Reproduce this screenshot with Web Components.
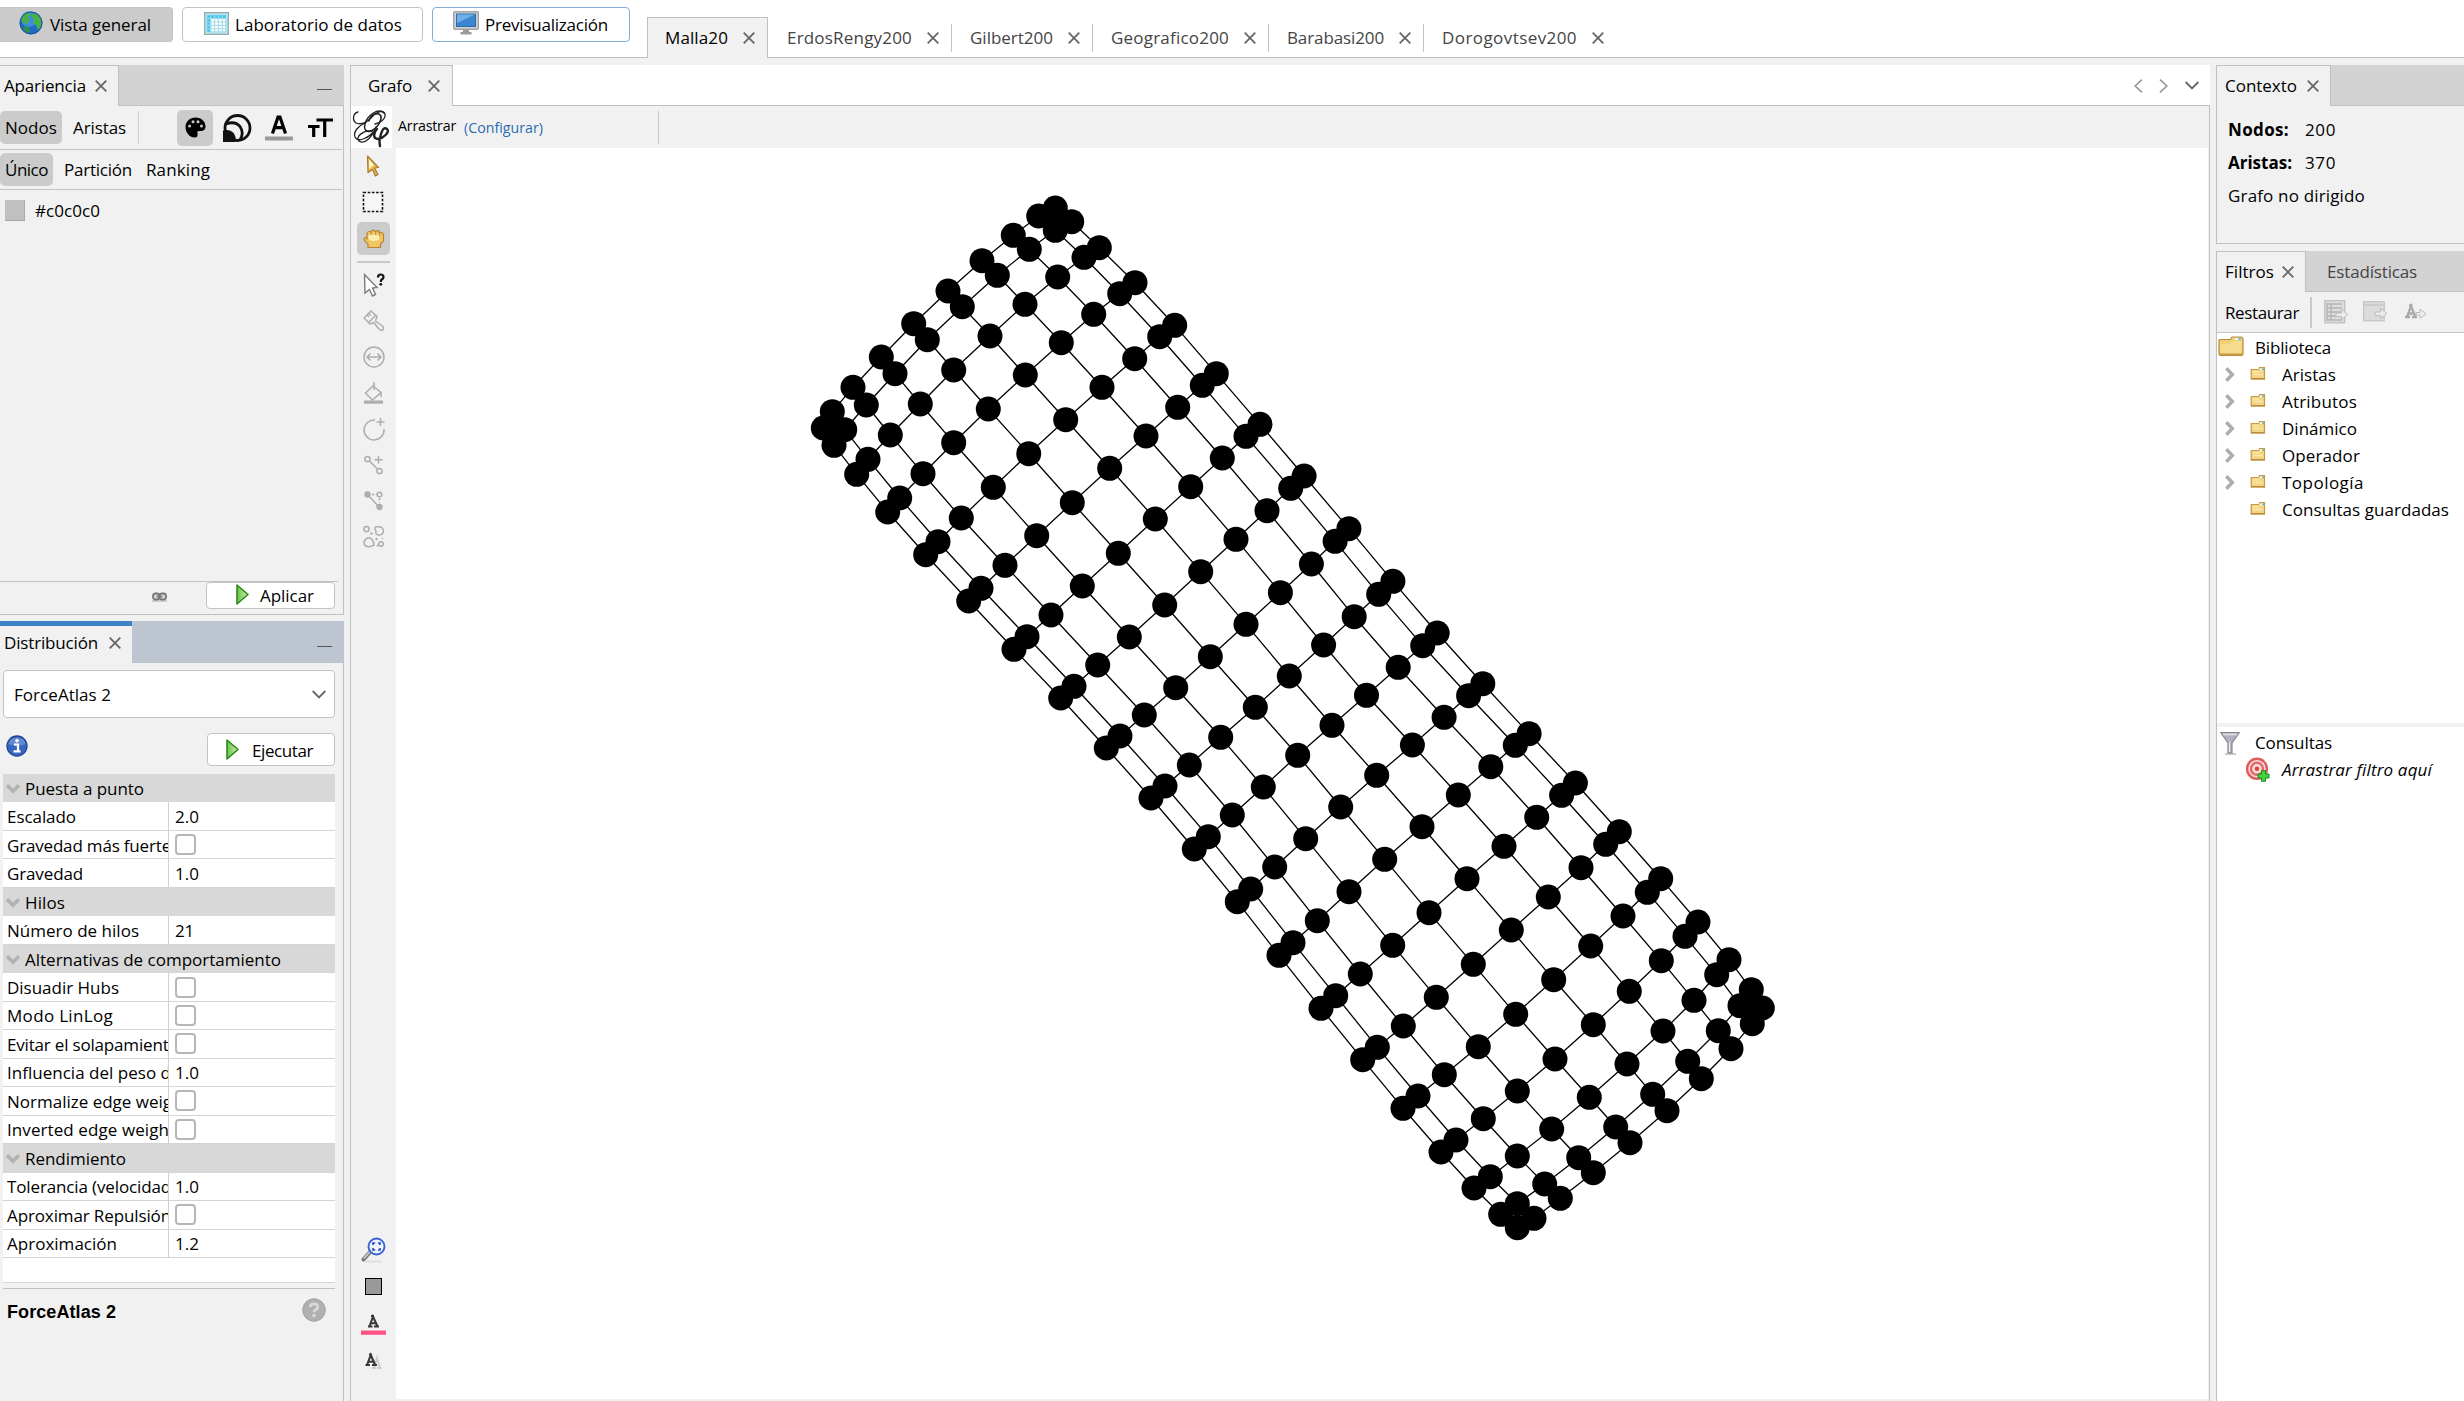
<!DOCTYPE html>
<html lang="es">
<head>
<meta charset="utf-8">
<title>Gephi</title>
<style>
html,body{margin:0;height:100%;overflow:hidden}
body{background:#f1f1f1;color:#000;font:17px/24px "Open Sans","Noto Sans",sans-serif}
gephi-app{display:block}
</style>
</head>
<body>
<gephi-app></gephi-app>
<script>
const define = (name, html, setup) => customElements.define(name, class extends HTMLElement {
  constructor() { super(); this.attachShadow({ mode: 'open' }); }
  connectedCallback() {
    if (this.shadowRoot.childNodes.length) return;
    const t = document.createElement('template');
    t.innerHTML = '<style>*{box-sizing:border-box}</style>' + (typeof html === 'function' ? html(this) : html);
    this.shadowRoot.append(t.content.cloneNode(true));
    if (setup) setup(this);
  }
});
const pen = document.createElement('canvas').getContext('2d');

/* Text run tracked to an exact advance width */
define('ui-text', el => {
  const a = n => el.getAttribute(n), size = +(a('size') || 17), w = +a('w'), s = el.textContent;
  const fam = a('family') ? `"${a('family')}",sans-serif` : '"Open Sans","Noto Sans",sans-serif';
  const font = `${el.hasAttribute('italic') ? 'italic' : 'normal'} ${el.hasAttribute('bold') ? 700 : 400} ${size}px ${fam}`;
  pen.font = font;
  const ls = w ? (w - pen.measureText(s).width) / s.length : +(a('ls') || 0);
  return `<style>:host{display:block;flex:none;white-space:nowrap;${w ? `width:${w}px;` : ''}}
  span{display:block;font:${font.replace(size + 'px', size + 'px/24px')};letter-spacing:${ls.toFixed(3)}px}</style><span><slot></slot></span>`;
});

const G = 'fill="none" stroke="#adadad" stroke-width="1.5"';
const folder = `<path d="M1 4.500Q1 3.500 2 3.500H12.500L14 1H23.500Q25 1 25 3V18Q25 19.500 23.500 19.500H2.500Q1 19.500 1 18Z" fill="#efcf78" stroke="#b98b3a" stroke-width="1.200"/><path d="M2.500 8H12L15 5H23.500V17.500H2.500Z" fill="#f6dd8e"/><path d="M2 18.200H24" stroke="#c99b45" stroke-width="1.500"/><path d="M17 3h6" stroke="#fff" stroke-width="1.500"/><path d="M20 3h3" stroke="#43c0e8" stroke-width="1.500"/>`;
const icons = {
  close: [12, 12, `<path d="M.7.700L11.300 11.300M11.300.700L.700 11.300" stroke="#666" stroke-width="1.800"/>`],
  globe: [24, 24, `<circle cx="12" cy="12" r="11.300" fill="#2167c4"/><circle cx="10" cy="8" r="8" fill="#4f9be6" opacity=".7"/><path d="M2 7Q5 1.500 11 1.500L12 4L9 6L11 9L8 13L4 12ZM13 3L18 2.500Q23 6 23 12Q22 17 19 19L17 14L14 12L15 8L12 6Z" fill="#48b04b"/><path d="M6 15L10 16L11 21L8 22Q5 20 4 17Z" fill="#2d8f52"/><circle cx="12" cy="12" r="11" fill="none" stroke="#174f9a"/>`],
  sheet: [25, 23, `<rect x=".75" y=".75" width="23.500" height="21.500" fill="#e9f3f4" stroke="#8faeb2" stroke-width="1.500"/><rect x="3" y="3" width="19" height="17" fill="#fff"/><path d="M3 3h19v3.500H3zM3 3h3.800v17H3z" fill="#45c8ea"/><path d="M3 6.500h19M3 10h19M3 13.400h19M3 16.800h19M6.800 3v17M10.600 3v17M14.400 3v17M18.200 3v17" stroke="#a7dcec" stroke-width="1.100"/><rect x="3" y="3" width="19" height="17" fill="none" stroke="#6fd2ec"/>`],
  screen: [26, 24, `<rect x=".75" y=".75" width="24.500" height="17.500" rx="1" fill="#d2d2d2" stroke="#a4a4a4" stroke-width="1.500"/><rect x="3.500" y="3" width="19" height="12.500" fill="#3b86cf" stroke="#2a6cb0"/><path d="M4 3.500H22L4 12Z" fill="#6fb0ea"/><path d="M10 18.500h6v2.500h2.500v2.500h-11V21H10z" fill="#9b9b9b"/>`],
  palette: [21, 21, `<path d="M10.500.500C16.500.500 20.500 4.500 20.500 9.500C20.500 13.500 17 14.500 14.500 14C12.500 13.700 12 15 12.500 16.500C13 19 12 20.500 10 20.500C4.500 20.500.500 15.500.500 10C.500 4.500 5 .500 10.500.500Z" fill="#000"/><g fill="#ccc"><circle cx="4.600" cy="9" r="1.500"/><circle cx="8" cy="4.800" r="1.500"/><circle cx="13" cy="4.800" r="1.500"/><circle cx="16.500" cy="9" r="1.500"/></g>`],
  rings: [29, 28, `<circle cx="14.500" cy="14" r="12.500" fill="none" stroke="#111" stroke-width="2.800"/><path d="M3 10Q12 6.500 17 12.500Q21.500 19 17 26" fill="none" stroke="#111" stroke-width="2.800"/><path d="M0 16.500Q7 15 10.500 19Q13.500 23 12.500 28H0Z" fill="#111"/>`],
  fontColor: [28, 26, `<path d="M7.500 18.500L13 2H15L20.500 18.500M9.800 12.700H18.200" fill="none" stroke="#000" stroke-width="3.200"/><path d="M0 21.500h28v4H0z" fill="#999"/>`],
  fontSize: [25, 20, `<path d="M0 8.500H11.500M5.700 8.500V19M8.500 2H25M16.700 2V19" fill="none" stroke="#000" stroke-width="3.200"/>`],
  link: [15, 10, `<path d="M0 9h15" stroke="#ccc" stroke-width="2"/><rect x="1" y="1.500" width="6.500" height="6" rx="2.500" fill="#ddd" stroke="#777" stroke-width="1.800"/><rect x="7.500" y="1.500" width="6.500" height="6" rx="2.500" fill="#ddd" stroke="#777" stroke-width="1.800"/><path d="M4.500 4.500h6" stroke="#777" stroke-width="1.800"/>`],
  play: [13, 21, `<defs><linearGradient id="g" x2="1"><stop offset="0" stop-color="#6cc24a"/><stop offset="1" stop-color="#c9efb0"/></linearGradient></defs><path d="M1 1L12 10.500L1 20Z" fill="url(#g)" stroke="#2c8a1d" stroke-width="1.600" stroke-linejoin="round"/>`],
  chevron: [14, 9, `<path d="M.7 1L7 7.500L13.300 1" fill="none" stroke="#666" stroke-width="1.800"/>`],
  left: [9, 14, `<path d="M8 .700L1.200 7L8 13.300" fill="none" stroke="#9a9a9a" stroke-width="1.700"/>`],
  right: [9, 14, `<path d="M1 .700L7.800 7L1 13.300" fill="none" stroke="#9a9a9a" stroke-width="1.700"/>`],
  info: [22, 22, `<circle cx="11" cy="11" r="10" fill="#3766bd" stroke="#1e4596" stroke-width="1.300"/><path d="M2.500 9Q3.500 2.500 11 2.500T19.500 9Q11 12.500 2.500 9Z" fill="#7fa1de" opacity=".6"/><circle cx="11" cy="5.800" r="1.800" fill="#fff"/><path d="M8 9.500h4v6.500M7.500 16.300h7" fill="none" stroke="#fff" stroke-width="2.200"/>`],
  fold: [14, 10, `<path d="M1 1.200L7 7.200L13 1.200" fill="none" stroke="#b2b2b2" stroke-width="3.700"/>`],
  expand: [10, 15, `<path d="M1.300 1.200L7.300 7.500L1.300 13.800" fill="none" stroke="#adadad" stroke-width="3.500"/>`],
  help: [24, 24, `<circle cx="12" cy="12" r="11.300" fill="#b0b0b0" stroke="#a2a2a2"/><path d="M8.300 9Q8.300 5.800 12 5.800T15.700 9Q15.700 11 13.500 11.800Q12 12.400 12 14.300" fill="none" stroke="#d9d9d9" stroke-width="2.800"/><circle cx="12" cy="17.500" r="1.800" fill="#d9d9d9"/>`],
  logo: [41, 42, `<rect width="41" height="42" fill="#fff"/><g fill="none" stroke="#222" stroke-linecap="round"><path d="M7 6C2 7 1 14 5 17C10 19 16 16 20 12C25 6 32 3 34 8C35 13 29 17 24 18" stroke-width="1.300"/><path d="M33 7C27 1 16 10 14 18C12 25 17 27 22 24C27 21 31 14 30 10C27 5 19 9 18 15" stroke-width="1.500"/><path d="M14 17C7 20 2 26 4 31C7 37 18 32 24 24M21 25C12 24 4 31 8 35C14 39 21 31 25 21" stroke-width="1.300"/><path d="M26 23C22 27 22 33 27 33C33 32 39 26 36 23C32 20 30 27 29 32C28 36 28 37 29 40" stroke-width="2.400"/></g>`],
  cursor: [14, 22, `<path d="M1.500 1L12.500 12.500L8.500 13L12 19.500L9.500 21L6.500 14.500L2 17.500Z" fill="#e9b94b" stroke="#a9782f" stroke-width="1.200" stroke-linejoin="round"/><path d="M3 4L8 10L3 14Z" fill="#fff3cf"/>`],
  marquee: [22, 22, `<rect x="1.500" y="1.500" width="19" height="19" fill="#f6f6f6" stroke="#111" stroke-width="1.600" stroke-dasharray="2.600 1.600"/>`],
  hand: [22, 20, `<path d="M5 18.500V15L1.500 11.500Q0 9 2.500 8.500L4 9V4.500Q4.200 2.500 6 2.500T8 4Q8.500 1.200 10.300 1.200T12.500 3.500Q13 1.500 14.700 1.700T16.500 4.500Q17 3 18.700 3.500T20.500 6V12L17.500 15V18.500Z" fill="#f0c663" stroke="#b78431" stroke-width="1.200"/><path d="M5 7L8 5L9.500 6.500L12 5L14 6.500L16 6V11Q11 13 6 11Z" fill="#fdebb0"/><path d="M8 3.500V6M12.500 3.500V6M16.500 4.500V7M4 8.500V11" stroke="#c6923c"/>`],
  query: [22, 24, `<path d="M1.500 1.500L14 14.500L9.500 15L12.500 21.500L9.500 23L6.500 16.500L2 20Z" fill="#fff" stroke="#7b7b7b" stroke-width="1.400"/><path d="M15 4.500Q15 1.500 17.700 1.500T20.500 4Q20.500 5.500 18.800 6.500Q17.800 7.200 17.800 9" fill="none" stroke="#111" stroke-width="2.200"/><circle cx="17.800" cy="11.300" r="1.400" fill="#111"/>`],
  brush: [22, 22, `<g ${G} stroke-linejoin="round"><path d="M1 8L8 1L14 6.500L12.500 11L20 16.500Q21.500 19.500 18.500 20.500Q16.500 20.500 11 12.500L7 14Z"/><path d="M4 5L6 7M6 3.500L8 5.500M5.500 12.500L13 5"/></g>`],
  width: [22, 22, `<g ${G}><circle cx="11" cy="11" r="10"/><path d="M4 11H18M7.500 7.500L4 11L7.500 14.500M14.500 7.500L18 11L14.500 14.500"/></g>`],
  bucket: [20, 22, `<g ${G}><path d="M1.500 11L9 4L17 10.500L8.500 18ZM10 0V8M17 10V15"/></g><path d="M0 18.500h19v3.200H0z" fill="#adadad"/>`],
  addNode: [22, 24, `<g ${G}><path d="M12 3A10 10 0 1 0 21 12M17.500 1V9M13.500 5H21.500"/></g>`],
  addEdge: [20, 20, `<g ${G}><circle cx="3.500" cy="4" r="2.600"/><circle cx="15.500" cy="16" r="2.600"/><path d="M5.500 6L13.500 14M14.500 1V8.500M10.500 4.700H18.500"/></g>`],
  path: [20, 20, `<circle cx="3.500" cy="3.500" r="3.200" fill="#adadad"/><circle cx="15.500" cy="16" r="3.200" fill="#adadad"/><g ${G}><circle cx="15.500" cy="3.500" r="2.300"/><path d="M4 4L15 16"/><path d="M8 3.500H13M15.500 7V12" stroke-dasharray="2.500 2"/></g>`],
  blobs: [22, 23, `<g ${G}><circle cx="3.500" cy="4" r="2.600"/><path d="M13 6Q10 2 14 1.800Q20 1 20.500 6Q20 10.500 15 10Q12 9 13 6Z"/><path d="M2 15Q5 11 8.500 14Q11 17 11 20Q6 23 2 20.500Q0 18 2 15Z"/><circle cx="18" cy="19" r="2.200"/></g><g fill="#adadad"><circle cx="8.500" cy="8.500" r="1.200"/><circle cx="13.500" cy="14" r="1.200"/><circle cx="14.500" cy="20.500" r="1"/><circle cx="19.500" cy="13.500" r=".8"/></g>`],
  zoom: [25, 26, `<path d="M4 24.500h17" stroke="#ddd" stroke-width="2"/><path d="M9.500 14.500L2.500 22.500" stroke="#777" stroke-width="4" stroke-linecap="round"/><path d="M9 14.500L3 21.500" stroke="#ccc" stroke-width="1.800"/><circle cx="15.500" cy="9.500" r="8" fill="#eef3ff" stroke="#3b62cf" stroke-width="1.900"/><path d="M12 8V6H14.200M17 6H19V8M19 11V13H17M14.200 13H12V11" fill="none" stroke="#2b4fc0" stroke-width="1.700"/>`],
  square: [17, 17, `<rect x=".5" y=".5" width="16" height="16" fill="#999" stroke="#000"/>`],
  labelColor: [25, 20, `<path d="M7 11.500h4.500M13 11.500h5M8.500 11.500L12 1.500L16.500 11.500M9.700 8.300h5M10 1h3" fill="none" stroke="#383838" stroke-width="2.100"/><path d="M0 15.500h25v4.300H0z" fill="#ff5383"/>`],
  labelShadow: [17, 17, `<path d="M7 15h4M12 15h4.500M9 15L12 5L15 15" fill="none" stroke="#ccc" stroke-width="2"/><path d="M.5 12h4.500M7 12h5M2 12L5.800 2L10.200 12M3.300 8.800h5M4 1.500h3" fill="none" stroke="#383838" stroke-width="2.100"/>`],
  folder: [26, 21, folder],
  folderSmall: [16, 13, `<path d="M1.200 2.500H9.500V.7H14.500V12H1.200Z" fill="#f3d585" stroke="#c79a45" stroke-width="1.200"/><path d="M3 5H9M3 7.500H13" stroke="#fae7a8" stroke-width="1.500"/><path d="M1 11.700H15" stroke="#b98b3a" stroke-width="1.400"/><path d="M9.500 2.300h3" stroke="#fff" stroke-width="1.500"/><path d="M12 2.300h2" stroke="#43c0e8" stroke-width="1.500"/>`],
  colAdd: [25, 24, `<rect x=".7" y=".7" width="20" height="22" fill="#ddd" stroke="#c2c2c2" stroke-width="1.400"/><path d="M3 4h15M3 8h15M3 12h15M3 16h15M3 20h15M3 3v18M7 3v18" stroke="#b4b4b4" stroke-width="1.400"/><path d="M12 13h5.500V9.500L24 14.500L17.500 19.500V16.500H12Z" fill="#ececec" stroke="#bbb"/>`],
  winAdd: [25, 22, `<rect x=".7" y=".7" width="20.500" height="19" fill="#dcdcdc" stroke="#c6c6c6" stroke-width="1.400"/><path d="M1 4h20" stroke="#c9c9c9" stroke-width="1.500"/><path d="M12 11h5.500V7.500L24 12.500L17.500 17.500V14.500H12Z" fill="#ececec" stroke="#bbb"/>`],
  aAdd: [22, 17, `<path d="M0 13h5M7 13h5M2 13L6 2L10.500 13M3.500 9.500h5M4 1.500h3.500" fill="none" stroke="#aaa" stroke-width="2.300"/><path d="M11 8.500h4V5L21 9.800L15 14.500V11H11Z" fill="#eee" stroke="#bbb"/>`],
  funnel: [20, 24, `<path d="M5 23h11" stroke="#ccc" stroke-width="2"/><path d="M.8 1.500H19.200L12 12V22H8V12Z" fill="#b0b1bc" stroke="#85868f" stroke-width="1.200"/><path d="M3 3.500H17" stroke="#e2e2e8" stroke-width="1.500"/><path d="M9.500 11V21" stroke="#ececf2" stroke-width="1.300"/>`],
  target: [24, 24, `<circle cx="11" cy="10.800" r="10" fill="#fbdcdc" stroke="#e25a5a" stroke-width="2.400"/><circle cx="11" cy="10.800" r="6" fill="none" stroke="#e36a6a" stroke-width="2.400"/><circle cx="11" cy="10.800" r="2.300" fill="#dd4444"/><path d="M15.500 12.500h4v3.500h3.500v4h-3.500v3.300h-4V20H12v-4h3.500z" fill="#43d33e" stroke="#188c22"/>`]
};
define('ui-icon', el => {
  const [w, h, body] = icons[el.getAttribute('name')];
  return `<style>:host{display:block;flex:none;width:${w}px;height:${h}px}svg{display:block;overflow:visible}</style><svg width="${w}" height="${h}" viewBox="0 0 ${w} ${h}">${body}</svg>`;
});

/* Large perspective buttons */
define('view-button', `<style>:host{display:flex;flex:none;align-items:center;height:35px;border:1.500px solid #c4c4c4;border-radius:4px;background:#fff;padding-top:1px}
:host([on]){background:#cbcbcb;border-color:#c4c4c4;border-left:0;border-radius:0 4px 4px 0}:host([hot]){border-color:#84aed8}</style><slot></slot>`);

/* Document tab of the workspace strip */
define('work-tab', el => `<style>:host{display:flex;flex:none;align-items:center;height:41px;color:#444}
:host([active]){background:#f1f1f1;border:solid #c0c0c0;border-width:1px 1px 0;color:#000;margin-right:19px;height:41px;padding:0 12px 0 17px}
i{width:1px;height:28px;background:#c4c4c4;margin:0 18px 0 12px}ui-icon{margin-left:15px}</style>
<ui-text w="${el.getAttribute('w')}">${el.getAttribute('label')}</ui-text><ui-icon name="close"></ui-icon>${el.hasAttribute('active') || el.hasAttribute('last') ? '' : '<i></i>'}`);

/* Docked panel header with its tabs */
define('dock-head', el => {
  const a = n => el.getAttribute(n), f = el.hasAttribute('focused');
  return `<style>:host{display:flex;height:${f ? 42 : 41}px;background:${a('bg') || '#d3d3d3'};border-bottom:1px solid ${f ? '#bcc5d0' : '#c0c0c0'}}
.tab{display:flex;align-items:center;width:${a('tw')}px;height:41px;padding:0 0 0 ${a('pl')}px;gap:${a('gap') || 10}px;background:#f1f1f1;border:solid #c0c0c0;border-width:1px 1px 0 ${a('lb') || 0}px}
${f ? '.tab{height:42px;border:0;border-top:5px solid #3d82c8;padding-bottom:3px}' : ''}
.rest{flex:1;display:flex;align-items:center}.min{width:15px;height:1.500px;background:#555;margin:${f ? 10 : 9}px 12px 0 auto}</style>
<div class="tab"><ui-text w="${a('w')}">${a('label')}</ui-text><ui-icon name="close"></ui-icon></div><div class="rest"><slot></slot>${el.hasAttribute('min') ? '<div class="min"></div>' : ''}</div>`;
});

define('appearance-panel', `<style>:host{display:flex;flex-direction:column;height:550px;border:solid #c0c0c0;border-width:0 1px 1px 0}
dock-head{margin-right:-1px}.bar{display:flex;align-items:center;height:44px;border-bottom:1px solid #c4c4c4;width:342px}
.b2{height:40px}.on{background:#cbcbcb;border-radius:5px;height:33px;display:flex;align-items:center;padding:0 5px}.bar ui-text{position:relative;top:.5px}
.sep{width:1px;height:33px;background:#cfcfcf;margin:0 38px 0 12px}.pal{width:36px;height:36px;border-radius:5px;background:#cbcbcb;display:grid;place-items:center;margin-right:10px}
.sw{display:flex;gap:10px;align-items:center;height:40px;padding-left:5px}.sw i{width:20px;height:21px;background:#c0c0c0;border:solid #a9a9a9;border-width:0 1px 1px 0}
.foot{margin-top:auto;display:flex;align-items:flex-start;height:33px;border-top:1px solid #c4c4c4;width:338px}
.btn{display:flex;align-items:center;width:129px;height:27px;margin-left:39px;border:1.500px solid #c4c4c4;border-radius:4px;background:#fff;padding-left:29px;gap:11px}</style>
<dock-head label="Apariencia" w="82" tw="119" pl="4" gap="9" min></dock-head>
<div class="bar"><div class="on"><ui-text w="52">Nodos</ui-text></div><ui-text w="53" style="margin-left:11px">Aristas</ui-text><div class="sep"></div>
<div class="pal"><ui-icon name="palette"></ui-icon></div><ui-icon name="rings"></ui-icon><ui-icon name="fontColor" style="margin-left:13px"></ui-icon><ui-icon name="fontSize" style="margin-left:15px"></ui-icon></div>
<div class="bar b2"><div class="on"><ui-text w="43">Único</ui-text></div><ui-text w="68" style="margin-left:11px">Partición</ui-text><ui-text w="64" style="margin-left:14px">Ranking</ui-text></div>
<div class="sw"><i></i><ui-text w="65" style="margin-top:1px">#c0c0c0</ui-text></div>
<div class="foot"><ui-icon name="link" style="margin:10px 0 0 152px"></ui-icon><div class="btn"><ui-icon name="play" style="margin-top:-2px"></ui-icon><ui-text w="54">Aplicar</ui-text></div></div>`);

/* One line of the property sheet: group heading, value or checkbox */
define('prop-row', el => {
  const a = n => el.getAttribute(n), v = a('v');
  return `<style>:host{display:flex;height:28.480px}
.h{flex:1;background:#d8d8d8;display:flex;align-items:center;gap:5px;padding:1px 0 0 3px}
.l{width:165px;overflow:hidden;padding:2px 0 0 4px}.v{flex:1;border-left:1px solid #d0d0d0;padding:1px 0 0 6px}.l,.v{border-bottom:1px solid #d4d4d4;display:flex;align-items:center}
.c{padding:0 0 0 6px}.c i{width:21px;height:21px;border:2px solid #b6b6b6;border-radius:4px;background:#fff}</style>` +
  (v === null ? `<div class="h"><ui-icon name="fold"></ui-icon><ui-text w="${a('w')}">${a('l')}</ui-text></div>`
   : `<div class="l"><ui-text w="${a('w')}">${a('l')}</ui-text></div><div class="v ${v ? '' : 'c'}">${v ? `<ui-text w="${v === '21' ? 19 : 24}">${v}</ui-text>` : '<i></i>'}</div>`);
});
const props = [['Puesta a punto',119],['Escalado',69,'2.0'],['Gravedad más fuerte',164,''],['Gravedad',76,'1.0'],['Hilos',40],['Número de hilos',132,'21'],
['Alternativas de comportamiento',256],['Disuadir Hubs',112,''],['Modo LinLog',106,''],['Evitar el solapamient',161.500,''],['Influencia del peso d',164,'1.0'],
['Normalize edge weig',165,''],['Inverted edge weigh',162,''],['Rendimiento',101],['Tolerancia (velocidad',164,'1.0'],['Aproximar Repulsión',164,''],['Aproximación',110,'1.2']];
define('layout-panel', `<style>:host{display:flex;flex-direction:column;flex:1;border-right:1px solid #c0c0c0}
dock-head{margin-right:-1px}.combo{display:flex;align-items:center;justify-content:space-between;width:332px;height:48px;margin:7px 0 0 3px;padding:0 8px 0 10px;border:1.500px solid #c4c4c4;border-radius:4px;background:#fff}
.run{display:flex;justify-content:space-between;margin:15px 8px 8px 6px;height:33px}.btn{display:flex;align-items:center;width:128px;border:1.500px solid #c4c4c4;border-radius:4px;background:#fff;padding:2px 0 0 18px;gap:13px}
.sheet{margin-left:3px;width:332px;height:509px;background:#fff;border-bottom:1px solid #d4d4d4}.desc{display:flex;justify-content:space-between;margin:5px 0 0 3px;width:332px;border-top:1px solid #c0c0c0;padding:9px 9px 0 4px}</style>
<dock-head label="Distribución" w="94" tw="132" pl="4" gap="11" bg="#bcc5d0" focused min></dock-head>
<div class="combo"><ui-text w="97" style="margin-top:1px">ForceAtlas 2</ui-text><ui-icon name="chevron"></ui-icon></div>
<div class="run"><ui-icon name="info" style="margin-top:2px"></ui-icon><div class="btn"><ui-icon name="play" style="margin-top:-3px"></ui-icon><ui-text w="61">Ejecutar</ui-text></div></div>
<div class="sheet">${props.map(([l, w, v]) => `<prop-row l="${l}" w="${w}"${v === undefined ? '' : ` v="${v}"`}></prop-row>`).join('')}</div>
<div class="desc"><ui-text bold size="18" family="Liberation Sans" w="109" style="margin-top:2px">ForceAtlas 2</ui-text><ui-icon name="help"></ui-icon></div>`);

/* 20 × 10 mesh; positions were sampled in four tiles: [origin x, origin y, scale x, scale y] */
const tiles = { a: [800,180,3,3], b: [900,600,3,3], c: [1200,350,2.6133,3], d: [1300,800,3,3] };
const mesh = `a 766,84 716,108 640,166 546,242 444,333 341,431 244,531 159,622 97,695 70,744
a 815,125 766,151 688,208 592,286 487,380 382,479 285,581 199,675 134,749 102,796
a 898,203 852,232 773,291 675,373 570,468 461,570 361,672 271,765 204,838 170,883
a 1005,308 959,341 881,403 784,488 676,585 565,687 461,788 369,881 299,954 263,996
a 1124,436 1079,470 1004,536 906,622 797,719 686,821 580,922 484,1014 414,1085 377,1124
a 1249,581 1207,616 1133,682 1038,768 929,865 817,968 710,1067 615,1156 543,1225 506,1263
a 1380,733 1338,769 1267,834 1172,920 1066,1017 955,1120 847,1218 753,1305 681,1370 642,1408
c 272,378 237,415 a 1401,992 1308,1078 1202,1175 1094,1275 988,1371 b 593,195 522,259 482,294
c 389,536 353,574 291,642 210,728 b 1038,73 931,170 827,263 733,345 660,408 619,444
c 504,694 467,733 403,800 323,885 b 1168,228 1066,322 962,412 868,495 795,558 753,594
c 620,849 582,887 518,952 435,1036 b 1296,376 1193,466 1090,561 997,645 925,710 883,747
c 739,1001 702,1037 638,1102 555,1185 b 1430,526 1322,621 1217,716 1124,801 1052,867 1012,905
c 860,1151 824,1186 760,1250 675,1335 d 366,80 254,178 147,275 52,362 b 1179,1028 1137,1066
c 981,1299 945,1336 d 710,52 612,139 501,236 387,338 278,436 181,522 107,587 63,625
d 958,95 917,133 843,203 745,291 634,390 520,493 409,592 310,678 232,742 188,779
d 1082,236 1042,277 969,348 872,438 761,539 647,643 535,740 433,824 354,888 309,925
d 1194,366 1155,409 1084,482 988,574 880,674 765,777 652,873 550,956 468,1020 423,1056
d 1287,479 1250,524 1182,601 1089,693 981,792 868,892 755,987 652,1068 571,1130 522,1164
d 1354,569 1320,617 1255,692 1163,784 1058,883 947,981 836,1073 734,1152 652,1211 602,1243
d 1387,624 1357,671 1293,746 1204,836 1101,932 990,1028 880,1118 781,1195 702,1255 652,1283`.split('\n').map(line => {
  let t; const row = [];
  for (const k of line.trim().split(' ')) {
    if (tiles[k]) { t = tiles[k]; continue; }
    const [x, y] = k.split(',').map(Number);
    row.push([(t[0] + x / t[2] - 396).toFixed(1), (t[1] + y / t[3] - 148).toFixed(1)]);
  }
  return row;
});
define('graph-canvas', () => {
  let lines = '', dots = '';
  mesh.forEach((row, j) => row.forEach((p, i) => {
    if (i) lines += `M${row[i - 1]}L${p}`;
    if (j) lines += `M${mesh[j - 1][i]}L${p}`;
    dots += `<circle cx="${p[0]}" cy="${p[1]}" r="12.500"/>`;
  }));
  return `<style>:host{display:block;flex:1;background:#fff}svg{display:block}</style><svg width="1812" height="1251"><path d="${lines}" fill="none" stroke="#000" stroke-width="1.300"/>${dots}</svg>`;
});

const tools = (list, h) => list.map(n => `<div class="t" style="height:${h}px"><ui-icon name="${n}"></ui-icon></div>`).join('');
define('graph-panel', `<style>:host{display:flex;flex-direction:column;width:1860px;height:1336px}
.nav{display:flex;align-items:center;gap:17px;margin:1px 11px 0 auto}.body{flex:1;display:flex;flex-direction:column;border:solid #c0c0c0;border-width:0 1px}
.bar{display:flex;height:42px;align-items:center}.bar i{width:1px;height:33px;background:#c6c6c6;margin-left:115px}
.main{display:flex;width:1857px;height:1251px}.col{width:45px;flex:none;display:flex;flex-direction:column}
.t{display:flex;align-items:center;justify-content:center}.hand{width:33px;height:33px;margin:2px 0 0 6px;background:#cbcbcb;border-radius:5px;display:grid;place-items:center}
.t ui-icon[name=cursor],.t ui-icon[name=marquee]{margin-right:2px}
hr{width:33px;height:1.500px;background:#c9c9c9;border:0;margin:6px 0 4px 6px}</style>
<dock-head label="Grafo" w="44" tw="103" pl="17" gap="16" lb="1" bg="#fff"><div class="nav"><ui-icon name="left"></ui-icon><ui-icon name="right" style="margin-left:-1px"></ui-icon><ui-icon name="chevron"></ui-icon></div></dock-head>
<div class="body"><div class="bar"><ui-icon name="logo"></ui-icon><ui-text size="14.2" w="58" style="margin:-3px 0 0 6px">Arrastrar</ui-text><ui-text size="14.2" w="79" style="margin:1px 0 0 8px;color:#2b6cb3">(Configurar)</ui-text><i></i></div>
<div class="main"><div class="col">${tools(['cursor','marquee'],36)}<div class="hand"><ui-icon name="hand"></ui-icon></div><hr>${tools(['query','brush','width','bucket','addNode','addEdge','path','blobs'],36)}
<div style="margin:auto 1px 20px 0">${tools(['zoom','square'],36.400)}<div style="height:2px"></div>${tools(['labelColor','labelShadow'],36)}</div></div><graph-canvas></graph-canvas></div></div>`);

define('context-panel', `<style>:host{display:block;height:179px;border:solid #c0c0c0;border-width:0 0 1px 1px}dock-head{margin-left:-1px}
.b{padding:7px 0 0 11px}.r{display:flex;height:33px;align-items:center}.r ui-text:first-child{margin-right:13px}</style>
<dock-head label="Contexto" w="72" tw="115" pl="8" lb="1"></dock-head>
<div class="b"><div class="r"><ui-text bold w="61" style="margin-right:16px">Nodos:</ui-text><ui-text w="31">200</ui-text></div><div class="r"><ui-text bold w="64">Aristas:</ui-text><ui-text w="31">370</ui-text></div><div class="r"><ui-text w="137">Grafo no dirigido</ui-text></div></div>`);

define('tree-row', el => `<style>:host{display:flex;align-items:center;height:27px;padding-left:8px}
.gap{width:10px}ui-icon[name=folderSmall]{margin:-3px 16px 0 15px}</style>
${el.hasAttribute('leaf') ? '<div class="gap"></div>' : '<ui-icon name="expand"></ui-icon>'}<ui-icon name="folderSmall"></ui-icon><ui-text w="${el.getAttribute('w')}">${el.getAttribute('l')}</ui-text>`);
define('filters-panel', `<style>:host{display:flex;flex-direction:column;flex:1;border-left:1px solid #c0c0c0}dock-head{margin-left:-1px}
.bar{display:flex;align-items:center;height:41px;border-bottom:1px solid #c4c4c4;padding-left:8px}.bar i{width:1.500px;height:31px;background:#c9c9c9;margin:0 12px 0 11px}
.lib{background:#fff;height:390px;padding-top:1px}.root{display:flex;align-items:center;height:27px;padding-left:1px;gap:11px}.q{flex:1;background:#fff;margin-top:4px;padding-top:2px}</style>
<dock-head label="Filtros" w="49" tw="90" pl="8" gap="8" lb="1"><ui-text w="90" style="margin:1px 0 0 21px;color:#444">Estadísticas</ui-text></dock-head>
<div class="bar"><ui-text w="74" style="margin-top:1px">Restaurar</ui-text><i></i><ui-icon name="colAdd"></ui-icon><ui-icon name="winAdd" style="margin-left:14px"></ui-icon><ui-icon name="aAdd" style="margin-left:17px"></ui-icon></div>
<div class="lib"><div class="root"><ui-icon name="folder" style="margin-top:-3px"></ui-icon><ui-text w="76">Biblioteca</ui-text></div>
${[['Aristas',54],['Atributos',75],['Dinámico',75],['Operador',78],['Topología',82],['Consultas guardadas',167]].map(([l, w], i) => `<tree-row l="${l}" w="${w}"${i > 4 ? ' leaf' : ''}></tree-row>`).join('')}</div>
<div class="q"><div class="root" style="padding-left:3px;gap:15px"><ui-icon name="funnel"></ui-icon><ui-text w="77">Consultas</ui-text></div>
<div class="root" style="padding-left:29px;gap:12px"><ui-icon name="target"></ui-icon><ui-text italic w="150">Arrastrar filtro aquí</ui-text></div></div>`);

define('gephi-app', `<style>:host{display:flex!important;flex-direction:column;width:2464px;height:1401px;overflow:hidden;background:#f1f1f1}
.top{display:flex;height:58px;background:#fff;border-bottom:1px solid #c0c0c0;margin-bottom:7px}.views{display:flex;gap:9px;padding-top:7px;width:647px}
.tabs{display:flex;align-items:flex-start;padding-top:17px}
.dock{display:flex;gap:6px;height:1336px}.left{width:344px;display:flex;flex-direction:column;gap:6px}.right{width:248px;display:flex;flex-direction:column;gap:7px}</style>
<div class="top"><div class="views">
<view-button on style="width:173px;padding-left:19px;gap:7px"><ui-icon name="globe" style="margin-top:-5px"></ui-icon><ui-text w="101">Vista general</ui-text></view-button>
<view-button style="width:241px;padding-left:21px;gap:6px"><ui-icon name="sheet" style="margin-top:-4px"></ui-icon><ui-text w="167">Laboratorio de datos</ui-text></view-button>
<view-button hot style="width:198px;padding-left:20px;gap:6px"><ui-icon name="screen" style="margin-top:-4px"></ui-icon><ui-text w="123">Previsualización</ui-text></view-button></div>
<div class="tabs"><work-tab active label="Malla20" w="63"></work-tab><work-tab label="ErdosRengy200" w="125"></work-tab><work-tab label="Gilbert200" w="83"></work-tab><work-tab label="Geografico200" w="118"></work-tab><work-tab label="Barabasi200" w="97"></work-tab><work-tab last label="Dorogovtsev200" w="135"></work-tab></div></div>
<div class="dock"><div class="left"><appearance-panel></appearance-panel><layout-panel></layout-panel></div><graph-panel></graph-panel><div class="right"><context-panel></context-panel><filters-panel></filters-panel></div></div>`);
</script>
</body>
</html>
